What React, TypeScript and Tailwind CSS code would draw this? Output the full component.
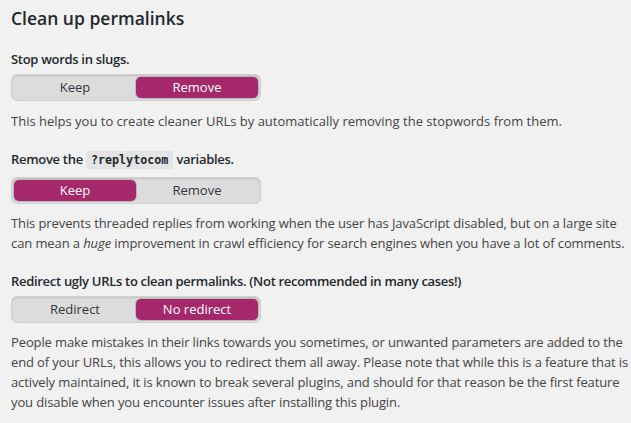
import React from "react";

type SwitchProps = {
  options: string[];
  active: number;
};

function Toggle({ options, active }: SwitchProps) {
  return (
    <div className="flex w-[250px] h-[27px] p-[2px] rounded-[6px] bg-[#dcdcdc] border border-[#d0d0d0] shadow-[inset_0_1px_2px_rgba(0,0,0,0.12)]">
      {options.map((label, i) => (
        <div
          key={label}
          className={
            i === active
              ? "flex-1 flex items-center justify-center rounded-[5px] bg-[#a4286a] text-white text-[13px] shadow-[0_0_0_1px_#b9b9b9]"
              : "flex-1 flex items-center justify-center text-[#32373c] text-[13px]"
          }
        >
          {label}
        </div>
      ))}
    </div>
  );
}

export default function App() {
  return (
    <div
      className="w-[631px] h-[423px] bg-[#f1f1f1] text-[#444] overflow-hidden px-[11px]"
      style={{ fontFamily: '"Segoe UI", "Open Sans", "Noto Sans", sans-serif' }}
    >
      {/* Heading */}
      <h2 className="pt-[7px] text-[17.5px] leading-[22px] font-semibold text-[#23282d]">
        Clean up permalinks
      </h2>

      {/* Stop words */}
      <section className="mt-[21px]">
        <p className="text-[13px] leading-[18px] font-semibold tracking-[-0.3px] text-[#23282d]">Stop words in slugs.</p>
        <div className="mt-[6px]">
          <Toggle options={["Keep", "Remove"]} active={1} />
        </div>
        <p className="mt-[10px] text-[13px] leading-[20px] whitespace-nowrap">
          This helps you to create cleaner URLs by automatically removing the stopwords from them.
        </p>
      </section>

      {/* replytocom */}
      <section className="mt-[18px]">
        <p className="text-[13px] leading-[20px] font-semibold tracking-[-0.3px] text-[#23282d]">
          Remove the{" "}
          <code className="px-[5px] py-[2px] bg-[#e4e4e4] text-[11.7px] font-bold tracking-normal" style={{ fontFamily: '"DejaVu Sans Mono", "Liberation Mono", monospace' }}>
            ?replytocom
          </code>{" "}
          variables.
        </p>
        <div className="mt-[7px]">
          <Toggle options={["Keep", "Remove"]} active={0} />
        </div>
        <p className="mt-[9px] text-[13px] leading-[20px] tracking-[-0.1px] whitespace-nowrap">
          This prevents threaded replies from working when the user has JavaScript disabled, but on a large site
          <br />
          can mean a <em>huge</em> improvement in crawl efficiency for search engines when you have a lot of comments.
        </p>
      </section>

      {/* Redirect */}
      <section className="mt-[18px]">
        <p className="text-[13px] leading-[20px] font-semibold text-[#23282d] tracking-[-0.3px] whitespace-nowrap">
          Redirect ugly URLs to clean permalinks. (Not recommended in many cases!)
        </p>
        <div className="mt-[5px]">
          <Toggle options={["Redirect", "No redirect"]} active={1} />
        </div>
        <p className="mt-[9px] text-[13px] leading-[20px] tracking-[-0.12px] whitespace-nowrap">
          People make mistakes in their links towards you sometimes, or unwanted parameters are added to the
          <br />
          end of your URLs, this allows you to redirect them all away. Please note that while this is a feature that is
          <br />
          actively maintained, it is known to break several plugins, and should for that reason be the first feature
          <br />
          you disable when you encounter issues after installing this plugin.
        </p>
      </section>
    </div>
  );
}
